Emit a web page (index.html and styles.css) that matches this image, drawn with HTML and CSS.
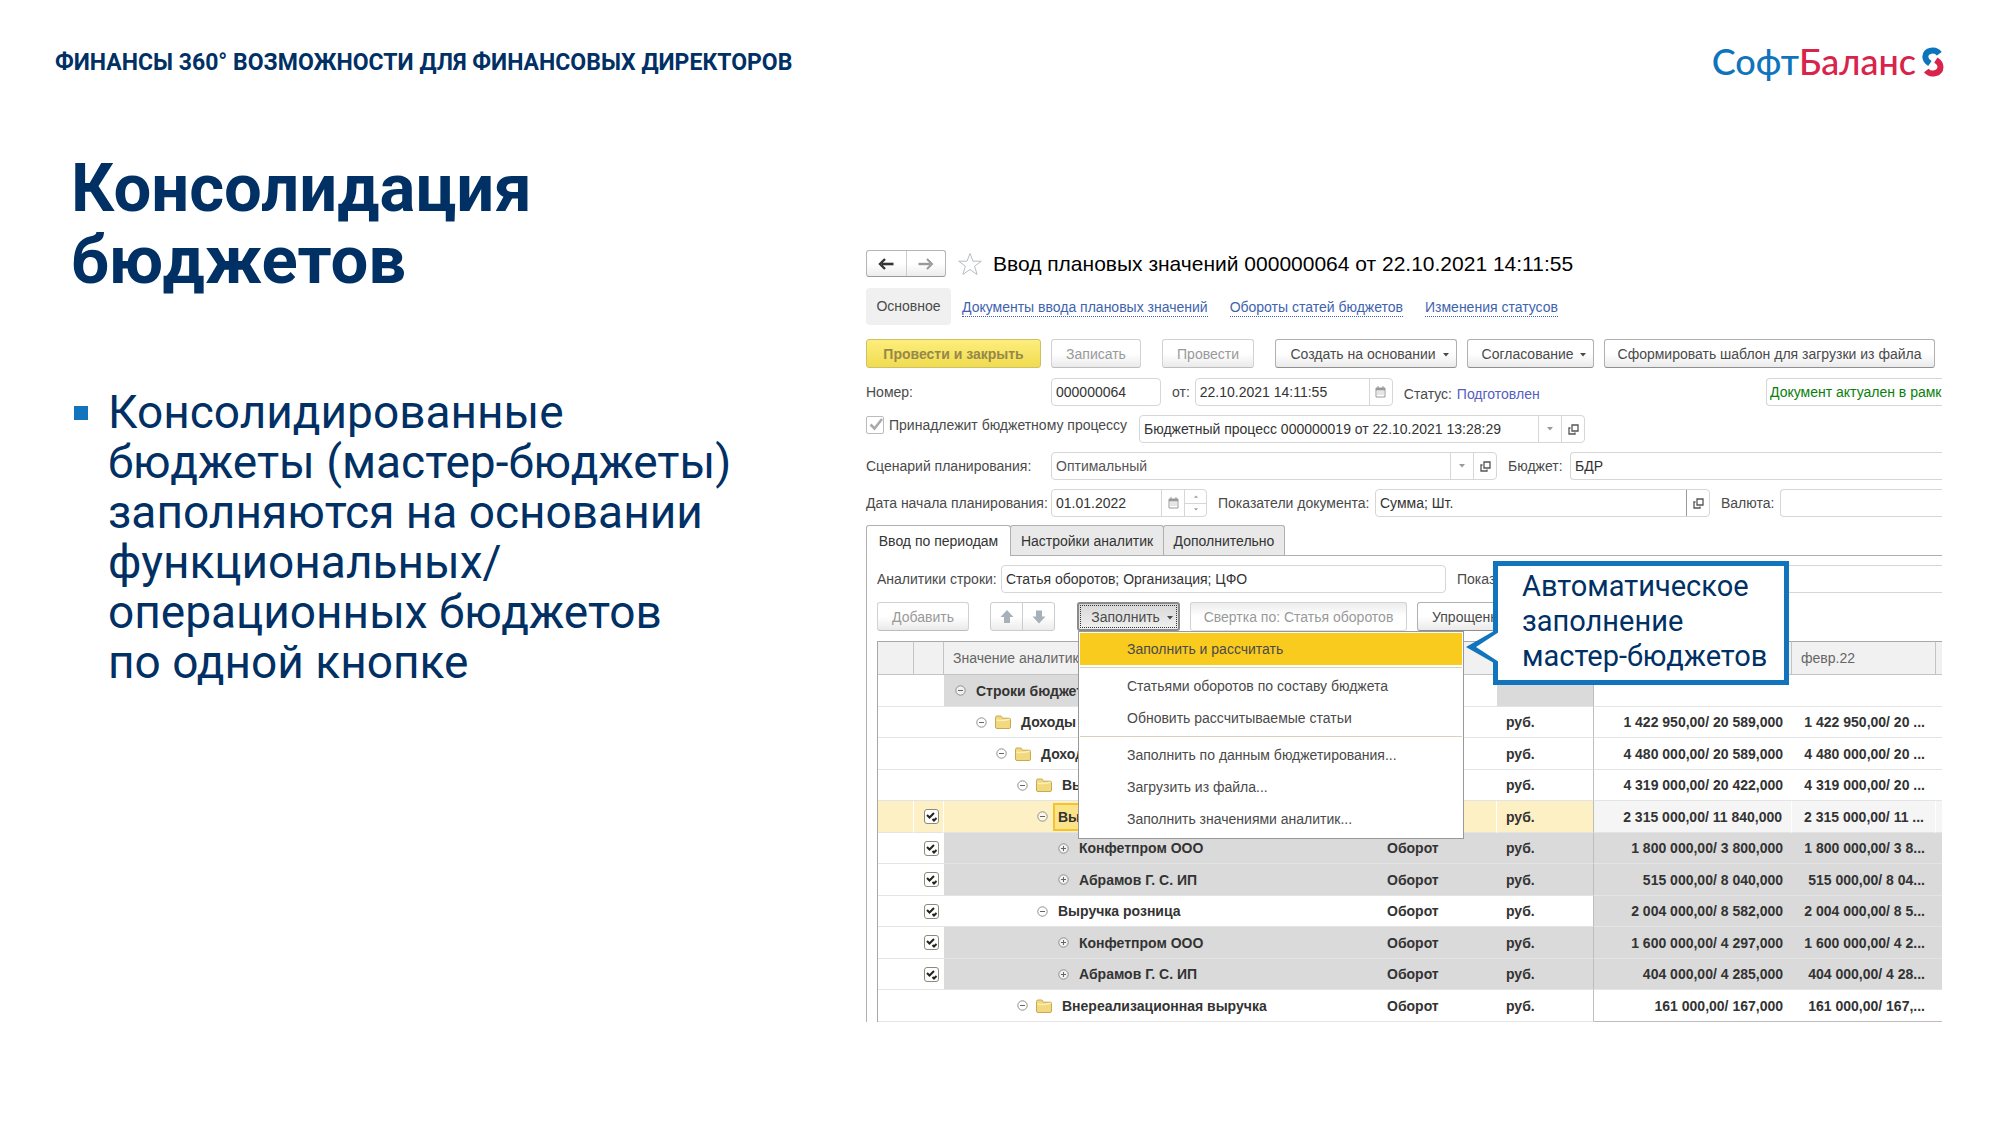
FILE: index.html
```html
<!DOCTYPE html>
<html lang="ru">
<head>
<meta charset="utf-8">
<title>Консолидация бюджетов</title>
<meta name="viewport" content="width=device-width, initial-scale=1">
<link rel="stylesheet" href="styles.css">
</head>
<body>
<svg class="sprite" aria-hidden="true">
  <symbol id="i-minus" viewBox="0 0 11 11"><circle cx="5.5" cy="5.5" r="4.7" fill="#fff" fill-opacity=".6" stroke="#8f8f8f"/><path d="M3 5.5h5" stroke="#666"/></symbol>
  <symbol id="i-plus" viewBox="0 0 11 11"><circle cx="5.5" cy="5.5" r="4.7" fill="#fff" fill-opacity=".6" stroke="#8f8f8f"/><path d="M3 5.5h5M5.5 3v5" stroke="#666"/></symbol>
  <symbol id="i-folder" viewBox="0 0 16 14"><path d="M.5 2.5q0-1.5 1.500-1.500h3.500q1 0 1.300 1l.4 1.200h7q1.300 0 1.300 1.300v7.500q0 1.500-1.500 1.500h-12q-1.500 0-1.500-1.500z" fill="#f2d980" stroke="#c9a950"/><path d="M1.500 5q4.500 1.500 13-.8" fill="none" stroke="#fbeeb9" stroke-width="1.500"/></symbol>
  <symbol id="i-open" viewBox="0 0 11 11"><path d="M4 1h6v6H4zM2.500 4H1v6h6V8.500" fill="none" stroke="#555" stroke-width="1.300"/></symbol>
  <symbol id="i-calendar" viewBox="0 0 11 12"><path d="M1 2h9v9H1z" fill="#fff" stroke="#999"/><path d="M1 3.200h9" stroke="#999" stroke-width="2.400"/><path d="M3 0v2M8 0v2" stroke="#999"/><path d="M2.500 6h6.500M2.500 8h6.500" stroke="#999" stroke-dasharray="1 1"/></symbol>
  <symbol id="i-caret" viewBox="0 0 6 4"><path d="M0 0h6L3 3.500z" fill="currentColor"/></symbol>
</svg>

<div class="slide">
  <header class="top">
    <p class="eyebrow">ФИНАНСЫ 360° ВОЗМОЖНОСТИ ДЛЯ ФИНАНСОВЫХ ДИРЕКТОРОВ</p>
    <div class="logo">
      <span class="logo-name"><span class="logo-soft">Софт</span><span class="logo-balance">Баланс</span></span>
      <svg class="logo-mark" viewBox="0 0 22 30" aria-hidden="true">
        <path d="M17.300 6.800C13.500 1.500 3.600 2.800 3.300 9.800c0 3.200 1.500 4.700 4.600 6.800" fill="none" stroke="#0e74bb" stroke-width="6"/>
        <path d="M4.300 23.500c4 5 13.900 3.500 14.200-3.500 0-3.200-1.500-4.800-4.600-6.900" fill="none" stroke="#d8234b" stroke-width="6"/>
      </svg>
    </div>
  </header>

  <main class="content">
    <section class="message">
      <h1>Консолидация<br>бюджетов</h1>
      <ul class="points">
        <li>Консолидированные<br>бюджеты (мастер-бюджеты)<br>заполняются на основании<br>функциональных/<br>операционных бюджетов<br>по одной кнопке</li>
      </ul>
    </section>

    <section class="app">
      <div class="app-view">
      <div class="titlebar">
        <div class="history">
          <button type="button" aria-label="Назад"><svg width="16" height="12" viewBox="0 0 16 12"><path d="M15.500 6H4" stroke="#333" stroke-width="2.600"/><path d="M7 1L2 6l5 5" fill="none" stroke="#333" stroke-width="2.400"/></svg></button>
          <button type="button" aria-label="Вперед"><svg width="16" height="12" viewBox="0 0 16 12"><path d="M.5 6H12" stroke="#999" stroke-width="2.400"/><path d="M9 1l5 5-5 5" fill="none" stroke="#999" stroke-width="2"/></svg></button>
        </div>
        <svg class="star" viewBox="0 0 26 24"><path d="M13 1.500l3 7.700h8.300l-6.700 5 2.500 8.300-7.100-5-7.100 5 2.500-8.300-6.700-5H10z" fill="#fff" stroke="#b9bcc0"/></svg>
        <h2>Ввод плановых значений 000000064 от 22.10.2021 14:11:55</h2>
      </div>

      <nav class="sections">
        <span class="current">Основное</span>
        <a href="#documents">Документы ввода плановых значений</a>
        <a href="#turnovers">Обороты статей бюджетов</a>
        <a href="#statuses">Изменения статусов</a>
      </nav>

      <div class="commands">
        <button type="button" class="btn primary w-175">Провести и закрыть</button>
        <button type="button" class="btn off w-90">Записать</button>
        <button type="button" class="btn off w-92 apart">Провести</button>
        <button type="button" class="btn drop w-182 apart">Создать на основании <svg class="caret"><use href="#i-caret"/></svg></button>
        <button type="button" class="btn drop w-127">Согласование <svg class="caret"><use href="#i-caret"/></svg></button>
        <button type="button" class="btn w-331">Сформировать шаблон для загрузки из файла</button>
      </div>

      <form class="form">
        <div class="row">
          <label class="lead" for="number">Номер:</label>
          <span class="field w-110"><input id="number" value="000000064"></span>
          <span class="dated"><label for="date">от:</label>
          <span class="field w-198"><input id="date" value="22.10.2021 14:11:55"><button type="button" aria-label="Календарь"><svg class="calendar"><use href="#i-calendar"/></svg></button></span></span>
          <span class="status">Статус: <a href="#status">Подготовлен</a></span>
          <span class="field actual"><input aria-label="Актуальность" value="Документ актуален в рамк"></span>
        </div>
        <div class="row">
          <label class="member"><input type="checkbox" class="tick" checked>Принадлежит бюджетному процессу</label>
          <span class="field w-446"><input aria-label="Бюджетный процесс" value="Бюджетный процесс 000000019 от 22.10.2021 13:28:29"><button type="button" aria-label="Выбрать"><svg class="caret pale"><use href="#i-caret"/></svg></button><button type="button" aria-label="Открыть"><svg class="open"><use href="#i-open"/></svg></button></span>
        </div>
        <div class="row">
          <label class="lead" for="scenario">Сценарий планирования:</label>
          <span class="field w-446 soft"><input id="scenario" value="Оптимальный"><button type="button" aria-label="Выбрать"><svg class="caret pale"><use href="#i-caret"/></svg></button><button type="button" aria-label="Открыть"><svg class="open"><use href="#i-open"/></svg></button></span>
          <label class="w-51" for="budget">Бюджет:</label>
          <span class="field rest"><input id="budget" value="БДР"></span>
        </div>
        <div class="row">
          <label class="lead" for="start">Дата начала планирования:</label>
          <span class="field w-156"><input id="start" value="01.01.2022"><button type="button" aria-label="Календарь"><svg class="calendar"><use href="#i-calendar"/></svg></button><span class="spin"><button type="button" aria-label="Больше"><svg class="up"><use href="#i-caret"/></svg></button><button type="button" aria-label="Меньше"><svg><use href="#i-caret"/></svg></button></span></span>
          <label class="w-146" for="metrics">Показатели документа:</label>
          <span class="field w-335"><input id="metrics" value="Сумма; Шт."><button type="button" class="strong" aria-label="Открыть"><svg class="open"><use href="#i-open"/></svg></button></span>
          <label class="w-48" for="currency">Валюта:</label>
          <span class="field rest"><input id="currency"></span>
        </div>
      </form>

      <div class="tabs" role="tablist">
        <button type="button" role="tab" aria-selected="true" class="w-145">Ввод по периодам</button>
        <button type="button" role="tab" aria-selected="false" class="w-154">Настройки аналитик</button>
        <button type="button" role="tab" aria-selected="false" class="w-122">Дополнительно</button>
      </div>

      <div class="panel">
        <div class="row">
          <label class="w-113" for="analytics">Аналитики строки:</label>
          <span class="field w-445"><input id="analytics" value="Статья оборотов; Организация; ЦФО"></span>
          <label class="w-48" for="shown">Показ.</label>
          <span class="field rest"><input id="shown"></span>
        </div>

        <div class="commands tools">
          <button type="button" class="btn off w-92">Добавить</button>
          <div class="history arrows apart">
            <button type="button" aria-label="Вверх"><svg width="14" height="14" viewBox="0 0 14 14"><path d="M7 0l6.500 7H10v6H4V7H.5z" fill="#a9b1b8"/></svg></button>
            <button type="button" aria-label="Вниз"><svg width="14" height="14" viewBox="0 0 14 14"><path d="M7 13.500L.5 6.500H4v-6h6v6h3.500z" fill="#a9b1b8"/></svg></button>
          </div>
          <div class="dropdown">
            <button type="button" class="btn drop pressed w-103">Заполнить <svg class="caret"><use href="#i-caret"/></svg></button>
            <div class="menu" role="menu">
              <button type="button" role="menuitem" class="active">Заполнить и рассчитать</button>
              <hr>
              <button type="button" role="menuitem">Статьями оборотов по составу бюджета</button>
              <button type="button" role="menuitem">Обновить рассчитываемые статьи</button>
              <hr>
              <button type="button" role="menuitem">Заполнить по данным бюджетирования...</button>
              <button type="button" role="menuitem">Загрузить из файла...</button>
              <button type="button" role="menuitem">Заполнить значениями аналитик...</button>
            </div>
          </div>
          <button type="button" class="btn off flat w-217">Свертка по: Статья оборотов</button>
          <button type="button" class="btn cut">Упрощенный</button>
        </div>

        <table class="grid">
          <colgroup><col class="c-mark"><col class="c-check"><col class="c-name"><col class="c-kind"><col class="c-unit"><col class="c-jan"><col class="c-feb"><col></colgroup>
          <thead><tr><th></th><th></th><th>Значение аналитики</th><th></th><th></th><th></th><th>февр.22</th><th></th></tr></thead>
          <tbody>
            <tr><td></td><td></td><td class="shade"><span class="node l0"><svg><use href="#i-minus"/></svg>Строки бюджета</span></td><td></td><td class="shade"></td><td></td><td></td><td></td></tr>
            <tr><td></td><td></td><td><span class="node l1"><svg><use href="#i-minus"/></svg><svg class="folder"><use href="#i-folder"/></svg>Доходы</span></td><td></td><td>руб.</td><td>1 422 950,00/ 20 589,000</td><td>1 422 950,00/ 20 ...</td><td></td></tr>
            <tr><td></td><td></td><td><span class="node l2"><svg><use href="#i-minus"/></svg><svg class="folder"><use href="#i-folder"/></svg>Доходы</span></td><td></td><td>руб.</td><td>4 480 000,00/ 20 589,000</td><td>4 480 000,00/ 20 ...</td><td></td></tr>
            <tr><td></td><td></td><td><span class="node l3"><svg><use href="#i-minus"/></svg><svg class="folder"><use href="#i-folder"/></svg>Выручка</span></td><td></td><td>руб.</td><td>4 319 000,00/ 20 422,000</td><td>4 319 000,00/ 20 ...</td><td></td></tr>
            <tr class="selected"><td></td><td><input type="checkbox" class="mark" aria-label="Выручка" checked></td><td><span class="node l4"><svg><use href="#i-minus"/></svg><span class="cursor">Выручка</span></span></td><td></td><td>руб.</td><td>2 315 000,00/ 11 840,000</td><td>2 315 000,00/ 11 ...</td><td></td></tr>
            <tr class="gray"><td></td><td><input type="checkbox" class="mark" aria-label="Конфетпром ООО" checked></td><td><span class="node l5"><svg><use href="#i-plus"/></svg>Конфетпром ООО</span></td><td>Оборот</td><td>руб.</td><td>1 800 000,00/ 3 800,000</td><td>1 800 000,00/ 3 8...</td><td></td></tr>
            <tr class="gray"><td></td><td><input type="checkbox" class="mark" aria-label="Абрамов Г. С. ИП" checked></td><td><span class="node l5"><svg><use href="#i-plus"/></svg>Абрамов Г. С. ИП</span></td><td>Оборот</td><td>руб.</td><td>515 000,00/ 8 040,000</td><td>515 000,00/ 8 04...</td><td></td></tr>
            <tr class="half"><td></td><td><input type="checkbox" class="mark" aria-label="Выручка розница" checked></td><td><span class="node l4"><svg><use href="#i-minus"/></svg>Выручка розница</span></td><td>Оборот</td><td>руб.</td><td>2 004 000,00/ 8 582,000</td><td>2 004 000,00/ 8 5...</td><td></td></tr>
            <tr class="gray"><td></td><td><input type="checkbox" class="mark" aria-label="Конфетпром ООО" checked></td><td><span class="node l5"><svg><use href="#i-plus"/></svg>Конфетпром ООО</span></td><td>Оборот</td><td>руб.</td><td>1 600 000,00/ 4 297,000</td><td>1 600 000,00/ 4 2...</td><td></td></tr>
            <tr class="gray"><td></td><td><input type="checkbox" class="mark" aria-label="Абрамов Г. С. ИП" checked></td><td><span class="node l5"><svg><use href="#i-plus"/></svg>Абрамов Г. С. ИП</span></td><td>Оборот</td><td>руб.</td><td>404 000,00/ 4 285,000</td><td>404 000,00/ 4 28...</td><td></td></tr>
            <tr><td></td><td></td><td><span class="node l3"><svg><use href="#i-minus"/></svg><svg class="folder"><use href="#i-folder"/></svg>Внереализационная выручка</span></td><td>Оборот</td><td>руб.</td><td>161 000,00/ 167,000</td><td>161 000,00/ 167,...</td><td></td></tr>
          </tbody>
        </table>
      </div>
      </div>

      <aside class="callout">
        <svg class="pointer" viewBox="0 0 33 32" aria-hidden="true"><path d="M28 0L0 16l28 16z" fill="#1274bc"/><path d="M33 1L10 16l23 15z" fill="#fff"/></svg>
        Автоматическое<br>заполнение<br>мастер-бюджетов
      </aside>
    </section>
  </main>
</div>
</body>
</html>
```
FILE: styles.css
```css
* { box-sizing: border-box; }

body {
  margin: 0;
  background: #fff;
  color: #003064;
  font-family: Roboto, "Liberation Sans", sans-serif;
}

button, input {
  margin: 0;
  padding: 0;
  border: 0;
  background: none;
  color: inherit;
  font: inherit;
}

.sprite { display: none; }

.slide { min-height: 100vh; }

/* Slide header */
.top {
  display: flex;
  justify-content: space-between;
  align-items: center;
  height: 124px;
  padding: 0 56px 0 55px;
}

.eyebrow {
  margin: 0;
  font-size: 23px;
  font-weight: 700;
}

.logo {
  display: flex;
  align-items: center;
  gap: 6px;
}

.logo-name {
  padding-bottom: 3px;
  font-family: Lato, "Open Sans", sans-serif;
  font-size: 36px;
  font-weight: 500;
  line-height: 40px;
}

.logo-soft { color: #0e74bb; }
.logo-balance { color: #d8234b; }
.logo-mark { width: 22px; height: 30px; }

/* Slide body */
.content {
  display: grid;
  grid-template-columns: minmax(0, 865fr) minmax(0, 1135fr);
}

.message { padding: 28px 0 0 71px; }

h1 {
  margin: 0;
  font-size: 67px;
  line-height: 72px;
  font-weight: 700;
}

.points {
  margin: 91px 0 0;
  padding: 0;
  list-style: none;
  font-size: 46px;
  line-height: 50px;
}

.points li {
  position: relative;
  padding-left: 37px;
}

.points li::before {
  content: "";
  position: absolute;
  left: 3px;
  top: 19px;
  width: 14px;
  height: 14px;
  background: #1274bc;
}

/* Application window */
.app {
  position: relative;
  margin: 116px 58px 0 0;
  color: #4a4a4a;
  font: 14px/20px "Liberation Sans", Arial, sans-serif;
}

.app-view {
  padding: 10px 0 0 1px;
  overflow: hidden;
  white-space: nowrap;
}

.titlebar {
  display: flex;
  align-items: center;
  height: 27px;
}

.history {
  display: flex;
  width: 80px;
  height: 27px;
  border: 1px solid #b5b5b5;
  border-bottom-color: #999;
  border-radius: 3px;
  background: linear-gradient(#fff 50%, #ececec);
}

.history button {
  flex: 1;
  display: flex;
  align-items: center;
  justify-content: center;
}

.history button + button { border-left: 1px solid #ccc; }

.star { width: 26px; height: 24px; margin: 0 10px 0 11px; }

h2 {
  margin: 0;
  color: #000;
  font-size: 21px;
  font-weight: 400;
}

.sections {
  display: flex;
  align-items: center;
  gap: 22px;
  height: 37px;
  margin-top: 11px;
}

.current {
  width: 85px;
  margin-right: -11px;
  border-radius: 4px;
  background: #f0f0f0;
  line-height: 37px;
  text-align: center;
}

.app a { color: #3e63b0; text-decoration: none; }
.sections a { margin-top: 2px; border-bottom: 1px dotted #3e63b0; line-height: 17px; }

.commands {
  display: flex;
  gap: 10px;
  margin-top: 14px;
}

.btn {
  height: 29px;
  border: 1px solid #b0b0b0;
  border-bottom-color: #8f8f8f;
  border-radius: 3px;
  background: linear-gradient(#fff 50%, #eaeaea);
  flex: none;
}

.btn.off { border-color: #d2d2d2; border-bottom-color: #bdbdbd; color: #999; }
.btn.flat { border-bottom-color: #e0e0e0; background: linear-gradient(#ececec, #fff 50%); }
.btn.drop { padding-left: 7px; }
.btn.cut { padding: 0 14px; }
.btn.primary {
  border-color: #cfc067;
  background: linear-gradient(#fdee7c, #f0dc50);
  color: #97884a;
  font-weight: 700;
}
.btn.pressed {
  border: 2px solid #8a8a8a;
  outline: 1px dotted #333;
  outline-offset: -4px;
  background: linear-gradient(#d8d8d8, #f0f0f0);
}

.apart { margin-left: 11px; }

.caret { width: 6px; height: 4px; margin-left: 3px; vertical-align: 2px; }
.pale { margin: 0; color: #999; }
.open { width: 11px; height: 11px; }
.calendar { width: 11px; height: 12px; }

.form {
  display: grid;
  grid-template-columns: minmax(0, 1fr);
  gap: 9px;
  margin-top: 10px;
}

.row {
  display: flex;
  align-items: center;
  gap: 11px;
}

.lead { width: 174px; }
.row > label { flex: none; }

.field {
  display: flex;
  height: 28px;
  flex: none;
  border: 1px solid #d6d6d6;
  border-radius: 4px;
  background: #fff;
  color: #333;
}

.field input { flex: 1; min-width: 0; padding: 0 4px; }
.field.soft { color: #555; }

.field > button {
  display: flex;
  width: 23px;
  align-items: center;
  justify-content: center;
  border-left: 1px solid #d6d6d6;
}
.field > button.strong { border-left: 1px solid #999; }

.spin { display: grid; width: 22px; border-left: 1px solid #d6d6d6; }
.spin button { display: flex; align-items: center; justify-content: center; color: #999; }
.spin button + button { border-top: 1px solid #d6d6d6; }
.spin svg { width: 4px; height: 3px; }
.spin .up { transform: rotate(180deg); }

.field.rest, .field.actual { border-right: 0; border-radius: 4px 0 0 4px; }
.field.rest { flex: 1; min-width: 0; }
.field.actual { width: 176px; margin-left: auto; color: #0a800a; }
.field.actual input { padding: 0 0 0 3px; }

.dated { display: flex; align-items: center; gap: 5px; }
.status { padding-top: 4px; }
.status a { margin-left: 1px; color: #5560c0; }

.member {
  display: flex;
  align-items: center;
  gap: 5px;
  width: 262px;
  padding-bottom: 8px;
}

.tick {
  width: 18px;
  height: 18px;
  appearance: none;
  border: 1px solid #bbb;
  border-radius: 2px;
  background: url("data:image/svg+xml,%3Csvg xmlns='http://www.w3.org/2000/svg' viewBox='0 0 16 16'%3E%3Cpath d='M3.500 7.500l4 4L15 2' fill='none' stroke='%23aaa' stroke-width='2.500'/%3E%3C/svg%3E") center / 16px;
}

.tabs { display: flex; margin-top: 8px; }

.tabs button {
  height: 30px;
  border: 1px solid #b0b0b0;
  border-bottom: 0;
  border-radius: 3px 3px 0 0;
  background: #e9e9e9;
  color: #333;
}
.tabs button + button { margin-left: -1px; }
.tabs [aria-selected="true"] {
  position: relative;
  height: 31px;
  margin-bottom: -1px;
  background: #fff;
}

.panel {
  padding: 9px 0 0 10px;
  border: solid #b0b0b0;
  border-width: 1px 0 0 1px;
}

.tools { margin-top: 9px; }
.arrows { width: 65px; height: 29px; margin-right: 12px; border-color: #ccc; }
.dropdown { position: relative; }

.menu {
  position: absolute;
  z-index: 2;
  top: 29px;
  left: 1px;
  width: 386px;
  padding: 1px 1px 3px;
  border: 1px solid #999;
  background: #fff;
}

.menu button {
  display: block;
  width: 100%;
  height: 32px;
  padding-left: 47px;
  text-align: left;
}
.menu .active { background: #f9cb1f; }
.menu hr { margin: 2px 0; border: 0; border-top: 1px solid #d8d2bd; }

/* Budget table */
.grid {
  width: 100%;
  margin-top: 10px;
  table-layout: fixed;
  border-spacing: 0;
  border-left: 1px solid #a8a8a8;
  color: #333;
}

.c-mark { width: 36px; }
.c-check { width: 30px; }
.c-name { width: 434px; }
.c-kind { width: 119px; }
.c-unit { width: 97px; }
.c-jan { width: 198px; }
.c-feb { width: 144px; }

.grid th {
  height: 34px;
  padding: 0 9px;
  border: solid #c4c4c4;
  border-width: 1px 1px 1px 0;
  border-top-color: #a8a8a8;
  background: #f1f1f1;
  color: #666;
  font-weight: 400;
  text-align: left;
}

.grid td {
  height: 31px;
  padding: 0 9px;
  border-bottom: 1px solid #e4e4e4;
  font-weight: 700;
}
.grid tr:nth-child(odd) td { height: 32px; }
.grid th:last-child, .grid td:last-child { padding: 0; border-right: 0; }
.grid td:nth-child(2) { padding: 0 0 0 10px; line-height: 0; }
.grid td:nth-child(3) { padding: 0 0 0 11px; }
.grid td:nth-child(5) { border-right: 1px solid #bdbdbd; }
.grid td:nth-child(6) { text-align: right; }
.grid td:nth-child(7) { padding-right: 11px; text-align: right; }
.grid tr:last-child td:nth-child(n+6) { border-bottom-color: #bdbdbd; }

.shade, .gray td:nth-child(n+3), .half td:nth-child(n+6) { background: #dadada; }
.selected td { background: #fdf0c4; border-right: 1px solid #fff; }
.selected td:nth-child(n+6) { background: #f5f5f5; }

.node { display: flex; align-items: center; }
.node svg { width: 11px; height: 11px; margin-right: 10px; flex: none; }
.node .folder { width: 16px; height: 14px; margin: 0 10px 0 -2px; }
.l1 { padding-left: 21px; }
.l2 { padding-left: 41px; }
.l3 { padding-left: 62px; }
.l4 { padding-left: 82px; }
.l5 { padding-left: 103px; }

.cursor {
  flex: 1;
  margin-left: -5px;
  padding-left: 3px;
  border: 2px solid #f5c32e;
  background: #fbe388;
  line-height: 24px;
}

.mark {
  width: 15px;
  height: 15px;
  appearance: none;
  border: 1px solid #8d8b78;
  border-radius: 3px;
  background: #fff url("data:image/svg+xml,%3Csvg xmlns='http://www.w3.org/2000/svg' viewBox='0 0 13 13'%3E%3Cpath d='M2 5l2.500 2.500L9 3M7.500 9l1.500 1.500L11.500 8' fill='none' stroke='%23222' stroke-width='2'/%3E%3C/svg%3E") center / 13px;
}

/* Callout over the window */
.callout {
  position: absolute;
  z-index: 3;
  top: 321px;
  left: 628px;
  width: 296px;
  padding: 3px 0 6px 24px;
  border: 5px solid #1274bc;
  background: #fff;
  color: #003064;
  font: 29px/35px Roboto, sans-serif;
  white-space: nowrap;
}

.pointer {
  position: absolute;
  top: 65px;
  left: -32px;
  width: 33px;
  height: 32px;
}

/* Control widths */
.w-48 { width: 48px; }
.w-51 { width: 51px; }
.w-90 { width: 90px; }
.w-92 { width: 92px; }
.w-103 { width: 103px; }
.w-110 { width: 110px; }
.w-113 { width: 113px; }
.w-122 { width: 122px; }
.w-127 { width: 127px; }
.w-145 { width: 145px; }
.w-146 { width: 146px; }
.w-154 { width: 154px; }
.w-156 { width: 156px; }
.w-175 { width: 175px; }
.w-182 { width: 182px; }
.w-198 { width: 198px; }
.w-217 { width: 217px; }
.w-331 { width: 331px; }
.w-335 { width: 335px; }
.w-445 { width: 445px; }
.w-446 { width: 446px; }
```
